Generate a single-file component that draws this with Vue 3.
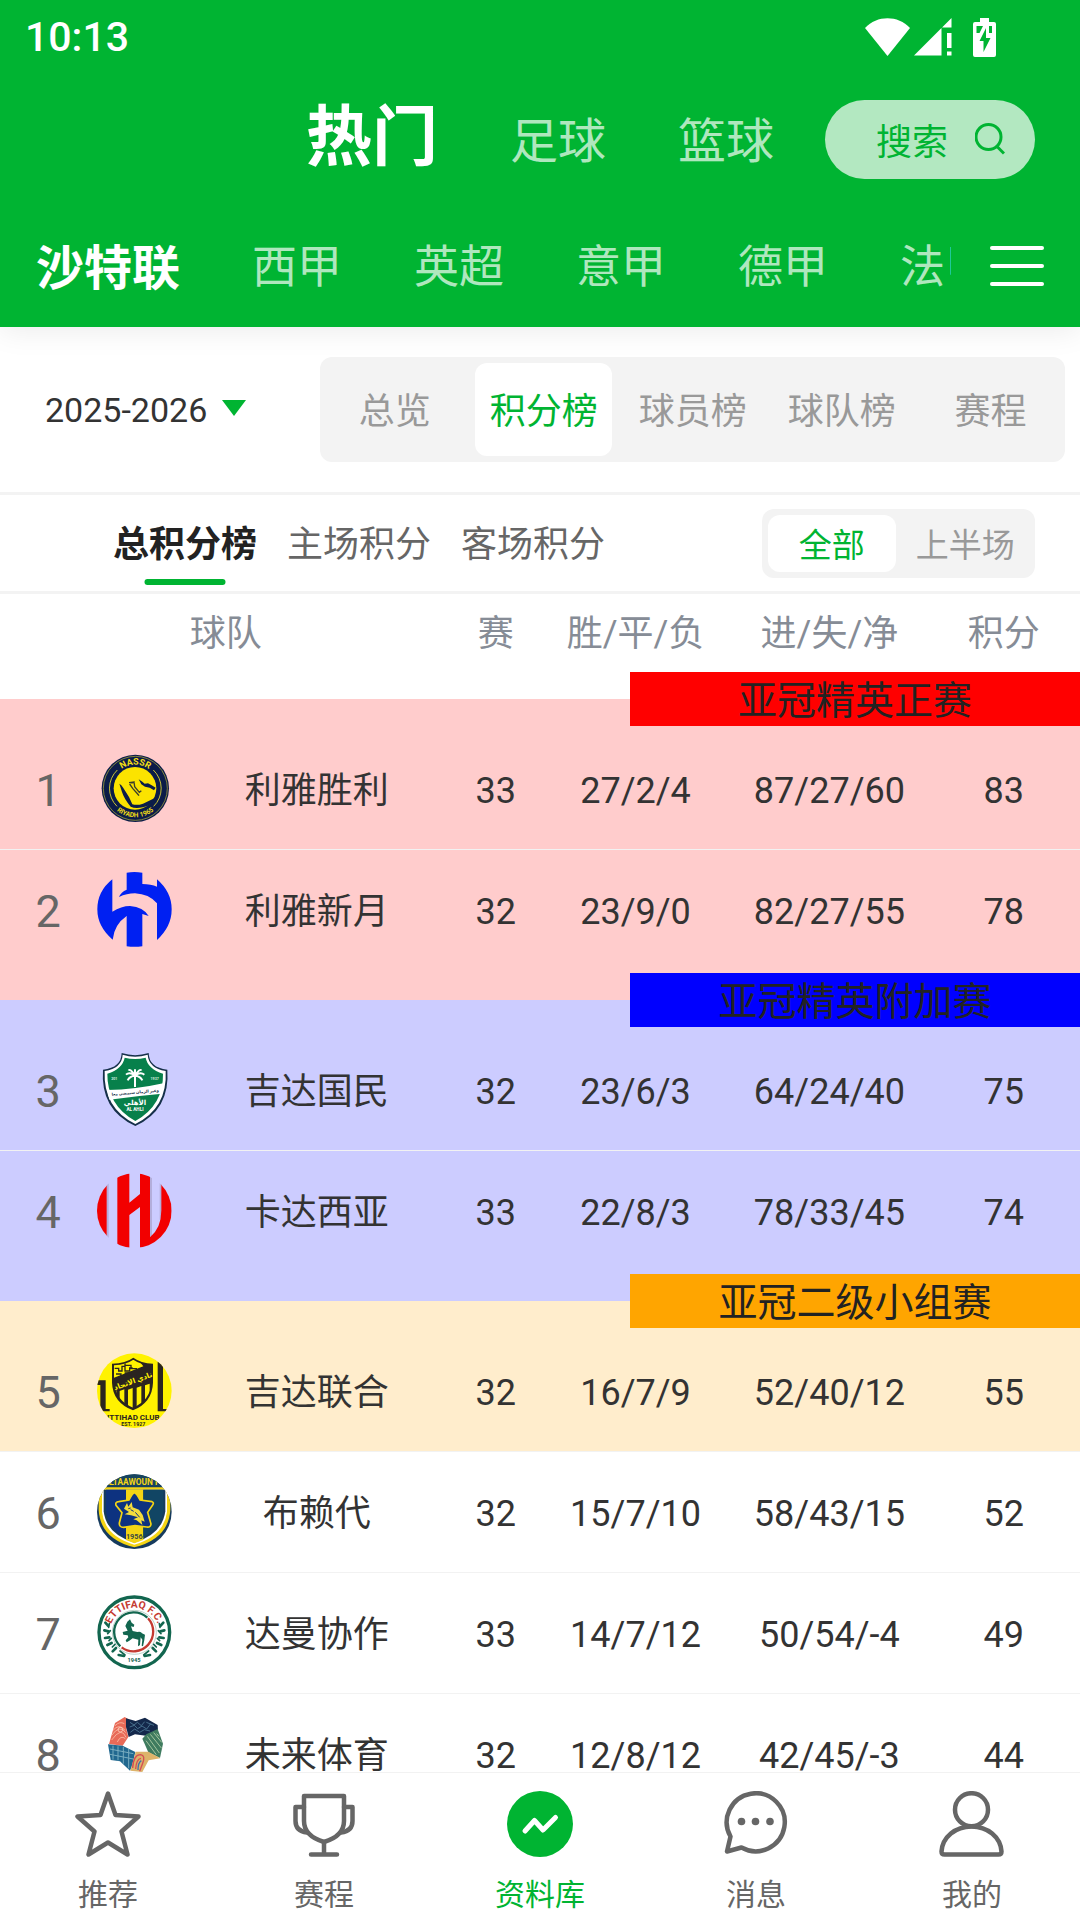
<script setup>
import { ref } from 'vue'

const sports = ['热门', '足球', '篮球']
const activeSport = ref('热门')

const leagues = ['沙特联', '西甲', '英超', '意甲', '德甲', '法甲']
const activeLeague = ref('沙特联')

const seasons = ['2025-2026']
const season = ref('2025-2026')

const views = ['总览', '积分榜', '球员榜', '球队榜', '赛程']
const activeView = ref('积分榜')

const scopes = ['总积分榜', '主场积分', '客场积分']
const activeScope = ref('总积分榜')

const periods = ['全部', '上半场']
const activePeriod = ref('全部')

const groups = [
  {
    key: 'elite',
    title: '亚冠精英正赛',
    teams: [
      { rank: 1, crest: 'nassr', name: '利雅胜利', played: 33, record: '27/2/4', goals: '87/27/60', points: 83 },
      { rank: 2, crest: 'hilal', name: '利雅新月', played: 32, record: '23/9/0', goals: '82/27/55', points: 78 },
    ],
  },
  {
    key: 'playoff',
    title: '亚冠精英附加赛',
    teams: [
      { rank: 3, crest: 'ahli', name: '吉达国民', played: 32, record: '23/6/3', goals: '64/24/40', points: 75 },
      { rank: 4, crest: 'qadsiah', name: '卡达西亚', played: 33, record: '22/8/3', goals: '78/33/45', points: 74 },
    ],
  },
  {
    key: 'second',
    title: '亚冠二级小组赛',
    teams: [
      { rank: 5, crest: 'ittihad', name: '吉达联合', played: 32, record: '16/7/9', goals: '52/40/12', points: 55 },
    ],
  },
  {
    key: 'rest',
    title: '',
    teams: [
      { rank: 6, crest: 'taawoun', name: '布赖代', played: 32, record: '15/7/10', goals: '58/43/15', points: 52 },
      { rank: 7, crest: 'ettifaq', name: '达曼协作', played: 33, record: '14/7/12', goals: '50/54/-4', points: 49 },
      { rank: 8, crest: 'neom', name: '未来体育', played: 32, record: '12/8/12', goals: '42/45/-3', points: 44 },
    ],
  },
]

const tabs = [
  { key: 'star', label: '推荐' },
  { key: 'cup', label: '赛程' },
  { key: 'data', label: '资料库' },
  { key: 'chat', label: '消息' },
  { key: 'user', label: '我的' },
]
const activeTab = ref('data')
</script>

<template>
  <div class="page">
    <header class="header">
      <div class="status">
        <time class="clock">10:13</time>
        <svg class="wifi" viewBox="0 0 45 38">
          <path d="M0 10C12-3 33-3 45 10L22.500 38z" fill="#fff" />
        </svg>
        <svg class="signal" viewBox="0 0 38 38">
          <path d="M0 37.500L27.500 10V37.500zM28 9.500L37.500 0V9.500zM33 15h4.500v15H33zM33 33.500h4.500v4H33z" fill="#fff" />
        </svg>
        <svg class="battery" viewBox="0 0 23 39">
          <path d="M7 0h9v4h5q2 0 2 2v31q0 2-2 2H2q-2 0-2-2V6q0-2 2-2h5z" fill="#fff" />
          <path d="M3.500 8H10L6.500 15h-3zM16 8h3v7h-3zM13 10v10h4.500l-7 14V23h-4z" fill="#00b432" />
        </svg>
      </div>

      <div class="sports">
        <nav class="sport-nav">
          <button
            v-for="item in sports"
            :key="item"
            type="button"
            :class="['sport', { 'sport-active': item === activeSport }]"
            @click="activeSport = item"
          >
            {{ item }}
          </button>
        </nav>
        <button type="button" class="search">
          <span>搜索</span>
          <svg class="search-icon" viewBox="0 0 30 32">
            <circle cx="13.500" cy="14" r="12.500" />
            <path d="M22 23.500L29 30.500" />
          </svg>
        </button>
      </div>

      <div class="leagues">
        <nav class="league-nav">
          <button
            v-for="item in leagues"
            :key="item"
            type="button"
            :class="['league', { 'league-active': item === activeLeague }]"
            @click="activeLeague = item"
          >
            {{ item }}
          </button>
        </nav>
        <button type="button" class="menu" aria-label="菜单">
          <span class="menu-line"></span>
          <span class="menu-line"></span>
          <span class="menu-line"></span>
        </button>
      </div>
    </header>

    <section class="filters">
      <label class="season">
        <select v-model="season" class="season-select" aria-label="赛季">
          <option v-for="item in seasons" :key="item">{{ item }}</option>
        </select>
        <svg class="season-arrow" viewBox="0 0 24 16"><path d="M0 0h24L12 16z" fill="#00b432" /></svg>
      </label>
      <div class="views">
        <button
          v-for="item in views"
          :key="item"
          type="button"
          :class="['view', { 'view-active': item === activeView }]"
          @click="activeView = item"
        >
          {{ item }}
        </button>
      </div>
    </section>

    <section class="scopes">
      <button
        v-for="item in scopes"
        :key="item"
        type="button"
        :class="['scope', { 'scope-active': item === activeScope }]"
        @click="activeScope = item"
      >
        {{ item }}
      </button>
      <div class="periods">
        <button
          v-for="item in periods"
          :key="item"
          type="button"
          :class="['period', { 'period-active': item === activePeriod }]"
          @click="activePeriod = item"
        >
          {{ item }}
        </button>
      </div>
    </section>

    <main class="standings">
      <table class="table">
        <colgroup>
          <col class="col-rank" />
          <col class="col-crest" />
          <col class="col-name" />
          <col class="col-played" />
          <col class="col-record" />
          <col class="col-goals" />
          <col class="col-points" />
        </colgroup>
        <thead>
          <tr>
            <th colspan="3" scope="col">球队</th>
            <th scope="col">赛</th>
            <th scope="col">胜/平/负</th>
            <th scope="col">进/失/净</th>
            <th scope="col">积分</th>
          </tr>
        </thead>
        <tbody v-for="group in groups" :key="group.key" :class="['group', `group-${group.key}`]">
          <tr v-if="group.title" class="divider">
            <th colspan="7" scope="rowgroup">
              <div class="banner">{{ group.title }}</div>
            </th>
          </tr>
          <tr v-for="team in group.teams" :key="team.rank" class="team">
            <td class="rank">{{ team.rank }}</td>
            <td class="crest-cell">
              <svg v-if="team.crest === 'nassr'" class="crest" viewBox="51 34 225 225">
                <defs>
                  <path id="nassr-top" d="M95 146a71 71 0 0 1 142 0" />
                  <path id="nassr-bottom" d="M79 146a87 87 0 0 0 174 0" />
                </defs>
                <circle cx="166" cy="146" r="101" fill="#0b1c48" />
                <circle cx="166" cy="146" r="96" fill="none" stroke="#b9b53c" stroke-width="2" />
                <circle cx="165" cy="146" r="64" fill="#fbe300" />
                <path d="M112 91a76 76 0 0 0-1 109M220 91a76 76 0 0 1 1 109" fill="none" stroke="#c9c236" stroke-width="3" />
                <path
                  d="M118 132Q124 134 130 145L147 172 157 194Q172 198 189 192L226 174Q215 198 189 203 165 208 152 201 132 177 126 157zM176 119L187 126 194 132 204 131 215 137 227 144 222 152 209 144 195 141 184 134z"
                  fill="#0b1c48"
                />
                <path d="M147 129L162 127 164 141 178 158 184 153M149 133L158 146 173 163 177 168M164 127L154 130" fill="none" stroke="#3b3d2c" stroke-width="4" />
                <text class="crest-text" font-size="27" fill="#f5df14" text-anchor="middle">
                  <textPath href="#nassr-top" startOffset="50%">NASSR</textPath>
                </text>
                <text class="crest-text" font-size="20" fill="#f5df14" text-anchor="middle">
                  <textPath href="#nassr-bottom" startOffset="50%">RIYADH 1965</textPath>
                </text>
              </svg>

              <svg v-else-if="team.crest === 'hilal'" class="crest" viewBox="51 396 225 225">
                <path
                  d="M97 418V515Q124 498 150 498 190 501 206 528L187 522V619Q163 622 140 619V528Q103 553 98 599 52 560 52 508 52 454 97 418z"
                  fill="#0020f2"
                />
                <path
                  d="M140 398Q163 394 187 398V432Q213 432 231 440V418Q275 456 275 508 275 560 231 600V490Q207 462 165 460 140 460 117 471 123 456 140 449z"
                  fill="#0020f2"
                />
              </svg>

              <svg v-else-if="team.crest === 'ahli'" class="crest" viewBox="51 38 225 225">
                <path
                  d="M125 41Q165 54 206 41 207 85 262 91 271 211 166 260 60 211 69 91 124 85 125 41z"
                  fill="#16304a"
                />
                <path
                  d="M128 46Q165 58 203 46 206 86 257 95 263 206 166 254 69 206 74 95 126 86 128 46z"
                  fill="#fff"
                />
                <path
                  d="M134 55Q165 63 197 55 203 88 249 103 251 197 166 245 81 197 82 103 128 88 134 55z"
                  fill="#07804b"
                />
                <path d="M82 152Q165 151 250 132L246 163Q166 170 88 181z" fill="#fff" />
                <path
                  d="M165 143V108M165 108Q150 86 146 94M165 108Q148 96 138 106M165 109Q149 110 143 123M165 108Q180 86 184 94M165 108Q182 96 193 106M165 109Q181 110 187 123M165 108V90"
                  fill="none"
                  stroke="#fff"
                  stroke-width="6"
                />
                <text class="crest-text" x="103" y="121" font-size="11" fill="#cfe8db" text-anchor="middle">201</text>
                <text class="crest-text" x="224" y="121" font-size="11" fill="#cfe8db" text-anchor="middle">1937</text>
                <text
                  class="crest-text"
                  x="166"
                  y="163"
                  font-size="12"
                  fill="#16304a"
                  text-anchor="middle"
                  transform="rotate(-5 166 160)"
                >وعبر الزمان سنمضي معا</text>
                <text class="crest-text" x="165" y="196" font-size="21" fill="#fff" text-anchor="middle">الأهلي</text>
                <text class="crest-text" x="165" y="216" font-size="14" fill="#fff" text-anchor="middle">AL AHLI</text>
              </svg>

              <svg v-else-if="team.crest === 'qadsiah'" class="crest" viewBox="51 398 225 225">
                <defs>
                  <clipPath id="qadsiah-disc"><circle cx="163" cy="511" r="112" /></clipPath>
                </defs>
                <g clip-path="url(#qadsiah-disc)">
                  <path d="M79 398h7v225h-7zM209 398h7v193h-7zM239 398h6v140h-6z" fill="#b3aedb" />
                  <path
                    d="M51 398h29v225H51zM112 398h36v89L180 461V398h30v193Q244 563 244 510V398h31v225H180V500L148 524v99h-36z"
                    fill="#f20000"
                  />
                </g>
              </svg>

              <svg v-else-if="team.crest === 'ittihad'" class="crest" viewBox="51 38 225 225">
                <defs>
                  <clipPath id="ittihad-disc"><circle cx="163" cy="151" r="112" /></clipPath>
                  <clipPath id="ittihad-shield">
                    <path d="M102 75Q140 72 160 58 180 72 214 75V126Q212 180 159 202 107 181 102 126z" />
                  </clipPath>
                </defs>
                <g clip-path="url(#ittihad-disc)">
                  <path d="M51 38h225v225H51z" fill="#fff200" />
                  <path d="M51 120h26v86h12v7H51V205h10V134H51zM233 64h16v142h14v7h-30z" fill="#2a2420" />
                </g>
                <path d="M96 70Q138 68 160 52 182 68 219 70V127Q217 186 159 210 98 186 96 127z" fill="#2a2420" />
                <g clip-path="url(#ittihad-shield)">
                  <path d="M96 50H168L190 78 98 114zM96 156L109 150V196H96zM119 152l14-5v70h-14zM144 148l14-5v77h-14zM170 142l14-5v80h-14zM195 135l14-5v60h-14z" fill="#fff200" />
                  <path d="M104 84h12v8h10V78h9v14h14v-9h9M108 101h15v7h13V98h15v7h18M135 63v12h18v10h18" fill="none" stroke="#2a2420" stroke-width="4" />
                </g>
                <text
                  class="crest-text"
                  x="158"
                  y="130"
                  font-size="22"
                  fill="#fff200"
                  text-anchor="middle"
                  transform="rotate(-20 158 120)"
                >نادي الاتحاد</text>
                <text class="crest-text" x="160" y="239" font-size="24" fill="#2a2420" text-anchor="middle" clip-path="url(#ittihad-disc)">ITTIHAD CLUB</text>
                <text class="crest-text" x="160" y="257" font-size="16" fill="#2a2420" text-anchor="middle">EST. 1927</text>
              </svg>

              <svg v-else-if="team.crest === 'taawoun'" class="crest" viewBox="51 402 225 225">
                <defs>
                  <clipPath id="taawoun-disc"><circle cx="163" cy="515" r="112" /></clipPath>
                </defs>
                <g clip-path="url(#taawoun-disc)">
                  <path d="M51 402h225v225H51z" fill="#163b5e" />
                  <path d="M56 444H271V510Q265 597 163 622 61 597 56 510z" fill="#f4d514" />
                  <path d="M66 449H261V516Q252 588 163 614 74 588 66 516z" fill="#fff" />
                  <path d="M71 449H256V514Q247 582 163 608 79 582 71 514z" fill="#163b5e" />
                  <path d="M78 449H138V592Q83 566 78 512z" fill="#0d3280" />
                  <path d="M138 449h52V600L163 610 138 600z" fill="#f4d514" />
                  <path d="M190 449h60v63q-8 50-60 80z" fill="#114564" />
                  <path d="M51 402H276V440H51z" fill="#174460" />
                  <path d="M51 442H276v4H51z" fill="#f4d514" />
                </g>
                <path
                  d="M164 458Q170 460 180 480L216 485Q223 488 218 495L203 517 213 552Q212 563 200 561L165 557 131 562Q117 562 118 549L126 518 108 496Q105 486 116 485L147 480Q158 458 164 458z"
                  fill="#0d3280"
                  stroke="#f4d514"
                  stroke-width="5"
                />
                <path
                  d="M132 506L141 489 145 500 155 486 158 502 177 509 188 525 194 545 184 541 187 555 170 541 160 538 174 532 153 526 134 523 147 516z"
                  fill="#f4dc3c"
                />
                <path d="M152 509l9 5M166 517l13 15M145 506l7-2" stroke="#0d3280" stroke-width="3" />
                <text class="crest-text" x="163" y="436" font-size="25" fill="#f4d514" text-anchor="middle" clip-path="url(#taawoun-disc)">ALTAAWOUN FC</text>
                <text class="crest-text" x="163" y="597" font-size="22" fill="#3b4b42" text-anchor="middle">1956</text>
              </svg>

              <svg v-else-if="team.crest === 'ettifaq'" class="crest" viewBox="51 44 225 225">
                <defs>
                  <path id="ettifaq-top" d="M89 156a74 74 0 0 1 148 0" />
                </defs>
                <circle cx="163" cy="156" r="106" fill="#fff" stroke="#12664f" stroke-width="10" />
                <path d="M121 198A59 59 0 0 1 202 112" fill="none" stroke="#12664f" stroke-width="7" />
                <path d="M204 114A59 59 0 0 1 125 201" fill="none" stroke="#c43a31" stroke-width="7" />
                <circle cx="163" cy="156" r="66" fill="none" stroke="#9bb9ae" stroke-width="2" />
                <path
                  d="M150 117L155 127 163 133 161 140 153 138 158 152 172 155Q183 152 186 159L195 163 193 179 189 198 185 196 187 178 182 171 180 194 174 198 175 178 158 174 148 181 140 186 137 180 145 171 143 165 130 163 128 155 143 151 136 137 142 124z"
                  fill="#12664f"
                />
                <g stroke="#12664f" stroke-width="8" stroke-linecap="round">
                  <path d="M76 127l8 9M73 150l12 3M75 173l13-2M82 194l13-6M98 213l10-10M116 224l16 3" />
                  <path d="M250 127l-8 9M253 150l-12 3M251 173l-13-2M244 194l-13-6M228 213l-10-10M210 224l-16 3" />
                  <path d="M88 130l-2 11M91 151l-8 9M94 174l-7 7M105 192l-8 8M120 212l15 12M238 130l2 11M235 151l8 9M232 174l7 7M221 192l8 8M206 212l-15 12" stroke-width="5" />
                </g>
                <text class="crest-text" font-size="31" fill="#c43a31" text-anchor="middle">
                  <textPath href="#ettifaq-top" startOffset="50%">ETTIFAQ F.C.</textPath>
                </text>
                <text class="crest-text" x="162" y="244" font-size="17" fill="#12664f" text-anchor="middle">1945</text>
              </svg>

              <svg v-else class="crest" viewBox="51 409 225 225">
                <path d="M87 493L105 430 134 412 148 420 139 449 145 472 128 498z" fill="#e86a58" />
                <path d="M138 416L167 424 195 414 233 436 234 454 197 468 165 464 146 472 138 441z" fill="#14284b" />
                <path d="M233 448L249 492 240 535 205 518 187 477 199 464z" fill="#3f7b5f" />
                <path d="M84 494L128 498 166 517 157 557 150 573 120 545 92 541z" fill="#21688f" />
                <path d="M167 516L205 516 241 536 206 542 187 577 151 573z" fill="#ddb36a" />
                <g fill="none">
                  <path d="M99 452q18-22 36 0M95 467q24-34 42-8M95 481q30-42 43-8M105 438q14-14 28-6M112 487q10-22 24-10" stroke="#ffd0b8" stroke-width="2" />
                  <circle cx="121" cy="450" r="7" stroke="#ffe0cc" stroke-width="2" />
                  <path d="M150 428l12 8 10-8 12 10 10-12M149 442l14-5 10 10 13-8 14 9 12-16M151 458l13-10 15 10 14-8 17 4M199 428l23 9" stroke="#5f91ac" stroke-width="2" />
                  <path d="M202 470l36 50M211 464l34 42M221 459l24 29M198 483l31 42M230 462l7 8" stroke="#a3c59e" stroke-width="3" />
                  <path d="M90 508l70 14M90 524l70 14M99 498v42M114 500v42M130 502v50M146 508v58" stroke="#78adc0" stroke-width="3" />
                  <path d="M158 565q2-40 24-40 15 2 6 26l-9 24M167 568q2-30 16-32" stroke="#d64d54" stroke-width="4" />
                  <path d="M174 571q0-22 10-28" stroke="#4272a8" stroke-width="4" />
                </g>
              </svg>
            </td>
            <td class="name">{{ team.name }}</td>
            <td>{{ team.played }}</td>
            <td>{{ team.record }}</td>
            <td>{{ team.goals }}</td>
            <td>{{ team.points }}</td>
          </tr>
        </tbody>
      </table>
    </main>

    <nav class="tabbar">
      <button
        v-for="tab in tabs"
        :key="tab.key"
        type="button"
        :class="['tab', { 'tab-active': tab.key === activeTab }]"
        @click="activeTab = tab.key"
      >
        <svg class="tab-icon" viewBox="0 0 66 66">
          <path
            v-if="tab.key === 'star'"
            d="M33 2.500L40.500 24 63.500 25.500 46.500 40.500 52.500 63.500 33 51.500 13.500 63.500 19.500 40.500 2.500 25.500 25.500 24z"
          />
          <g v-else-if="tab.key === 'cup'">
            <path d="M13 5H53V30Q53 45 33 51 13 45 13 30z" />
            <path d="M13 16H4.500V30Q4.500 40 16 41.500M53 16H61.500V30Q61.500 40 50 41.500M33 51V63.500M20 63.500H46" />
          </g>
          <g v-else-if="tab.key === 'data'">
            <circle class="tab-disc" cx="33" cy="33" r="33" />
            <path class="tab-trend" d="M18 40L27.500 29.500 36 39 48.500 26.500" />
          </g>
          <g v-else-if="tab.key === 'chat'">
            <path d="M7.500 45.500A29 29 0 1 1 18.500 56.500L4 60.500z" />
            <g class="tab-dots">
              <circle cx="18.500" cy="30.500" r="3.800" />
              <circle cx="32.500" cy="30.500" r="3.800" />
              <circle cx="47" cy="30.500" r="3.800" />
            </g>
          </g>
          <g v-else>
            <circle cx="32.500" cy="18.700" r="16.500" />
            <path d="M2.500 60.500C3.500 46 16.500 35.500 32.500 35.500S61.500 46 62.500 60.500Q62.500 63.500 59.500 63.500H5.500Q2.500 63.500 2.500 60.500z" />
          </g>
        </svg>
        <span>{{ tab.label }}</span>
      </button>
    </nav>
  </div>
</template>

<style>
body {
  background: #fff;
}
</style>

<style scoped>
.page {
  display: flex;
  flex-direction: column;
  height: 100vh;
  overflow: hidden;
  font-family: Roboto, "Noto Sans CJK SC", sans-serif;
  font-size: 36px;
  color: #333;
}

button,
select {
  margin: 0;
  padding: 0;
  border: none;
  background: none;
  font: inherit;
  color: inherit;
  white-space: nowrap;
  cursor: pointer;
}

svg {
  display: block;
  flex: none;
}

.header {
  position: relative;
  z-index: 1;
  flex: none;
  background: #00b432;
  box-shadow: 0 4px 28px rgba(0, 0, 0, 0.08);
  color: #fff;
}

.status {
  display: flex;
  align-items: center;
  height: 74px;
  padding: 0 84px 0 25px;
}

.clock {
  flex: 1;
  font-size: 41px;
  font-weight: 500;
}

.wifi {
  width: 45px;
  height: 38px;
  margin-right: 4px;
}

.signal {
  width: 38px;
  height: 38px;
  margin-right: 21px;
}

.battery {
  width: 23px;
  height: 39px;
}

.sports {
  display: flex;
  align-items: center;
  justify-content: flex-end;
  height: 130px;
  padding-right: 45px;
}

.sport-nav {
  display: flex;
  align-items: center;
  gap: 72px;
  margin-right: 51px;
}

.sport {
  padding-bottom: 4px;
  font-size: 48px;
  color: rgba(255, 255, 255, 0.7);
}

.sport-active {
  padding-bottom: 16px;
  font-size: 66px;
  font-weight: 700;
  color: #fff;
}

.search {
  display: flex;
  align-items: center;
  justify-content: space-between;
  width: 210px;
  height: 79px;
  padding: 0 30px 0 51px;
  border-radius: 40px;
  background: #b3e8c1;
  color: #00b432;
}

.search-icon {
  width: 30px;
  height: 32px;
  fill: none;
  stroke: #00b432;
  stroke-width: 3;
}

.leagues {
  display: flex;
  align-items: center;
  height: 123px;
}

.league-nav {
  display: flex;
  align-items: center;
  flex: 1;
  min-width: 0;
  overflow: hidden;
}

.league {
  flex: none;
  padding: 0 36px 4px;
  font-size: 45px;
  color: rgba(255, 255, 255, 0.7);
}

.league-active {
  font-size: 48px;
  font-weight: 700;
  color: #fff;
}

.menu {
  display: flex;
  flex-direction: column;
  gap: 14px;
  padding: 0 36px 0 39px;
}

.menu-line {
  width: 54px;
  height: 4px;
  border-radius: 2px;
  background: #fff;
}

.filters {
  display: flex;
  align-items: center;
  flex: none;
  height: 165px;
  padding: 0 15px 0 45px;
  border-bottom: 3px solid #f3f3f3;
}

.season {
  display: flex;
  align-items: center;
  flex: 1;
  gap: 14px;
}

.season-select {
  appearance: none;
  font-size: 34px;
}

.season-arrow {
  width: 24px;
  height: 16px;
  margin-bottom: 4px;
}

.views {
  display: flex;
  width: 73%;
  height: 105px;
  border-radius: 12px;
  background: #f3f3f3;
}

.view {
  flex: 1 1 0;
  margin: 6px;
  padding-bottom: 4px;
  border-radius: 12px;
  color: #999;
}

.scopes {
  display: flex;
  align-items: center;
  flex: none;
  gap: 30px;
  height: 96px;
  padding: 0 45px 0 113px;
  border-bottom: 3px solid #f3f3f3;
}

.scope {
  position: relative;
  height: 96px;
  padding-bottom: 4px;
  color: #666;
}

.scope-active {
  font-weight: 700;
  color: #222;
}

.scope-active::after {
  position: absolute;
  bottom: 6px;
  left: 50%;
  width: 81px;
  height: 6px;
  border-radius: 3px;
  background: #00b432;
  content: "";
  transform: translateX(-50%);
}

.periods {
  display: flex;
  gap: 6px;
  width: 261px;
  height: 57px;
  margin-left: auto;
  padding: 6px;
  border-radius: 12px;
  background: #f3f3f3;
}

.period {
  flex: 1 1 0;
  border-radius: 12px;
  font-size: 33px;
  color: #999;
}

.view-active,
.period-active {
  background: #fff;
  color: #00b432;
}

.standings {
  flex: 1;
  min-height: 0;
  overflow: hidden;
}

.table {
  width: 100%;
  border-collapse: separate;
  border-spacing: 0;
  table-layout: fixed;
}

.col-rank {
  width: 8.9%;
}

.col-crest {
  width: 7.2%;
}

.col-name {
  width: 25.7%;
}

.col-played {
  width: 8.2%;
}

.col-record {
  width: 17.7%;
}

.col-goals {
  width: 18.2%;
}

.col-points {
  width: 14.1%;
}

th,
td {
  padding: 0;
  font-weight: 400;
  line-height: 42px;
  text-align: center;
  white-space: nowrap;
}

thead th {
  height: 71px;
  padding-top: 4px;
  color: #868c96;
}

.group-elite {
  --above: #fff;
  --tint: #fcc;
  --accent: #f00;
}

.group-playoff {
  --above: #fcc;
  --tint: #ccf;
  --accent: #00f;
}

.group-second {
  --above: #ccf;
  --tint: #ffedcc;
  --accent: #ffa500;
}

.divider th {
  height: 60px;
  background: linear-gradient(var(--above) 50%, var(--tint) 50%);
}

.banner {
  width: 450px;
  margin-left: auto;
  padding-top: 4px;
  background: var(--accent);
  font-size: 39px;
  line-height: 50px;
  color: #222;
}

.team td {
  height: 116px;
  padding-top: 4px;
  border-bottom: 1px solid #f2f2f2;
  background: var(--tint, #fff);
}

.team .crest-cell {
  height: 118px;
  padding: 0 0 2px;
}

.group-elite .team:last-child td,
.group-playoff .team:last-child td {
  border-bottom: none;
}

.team .rank {
  font-size: 45px;
  color: #666;
}

.team .name {
  padding-left: 8px;
}

.crest {
  width: 75px;
  height: 75px;
  margin: 0 auto;
}

.crest-text {
  font-family: Roboto, "DejaVu Sans", sans-serif;
  font-weight: 700;
}

.tabbar {
  display: flex;
  flex: none;
  height: 147px;
  border-top: 1px solid #f2f2f2;
  background: #fff;
}

.tab {
  display: flex;
  flex: 1 1 0;
  flex-direction: column;
  align-items: center;
  gap: 18px;
  padding-top: 18px;
  font-size: 30px;
  line-height: 40px;
  color: #666;
}

.tab-active {
  color: #00b432;
}

.tab-icon {
  width: 66px;
  height: 66px;
  fill: none;
  stroke: currentColor;
  stroke-width: 4.500;
  stroke-linecap: round;
  stroke-linejoin: round;
}

.tab-disc,
.tab-dots {
  fill: currentColor;
  stroke: none;
}

.tab-icon .tab-trend {
  stroke: #fff;
  stroke-width: 5;
}
</style>
